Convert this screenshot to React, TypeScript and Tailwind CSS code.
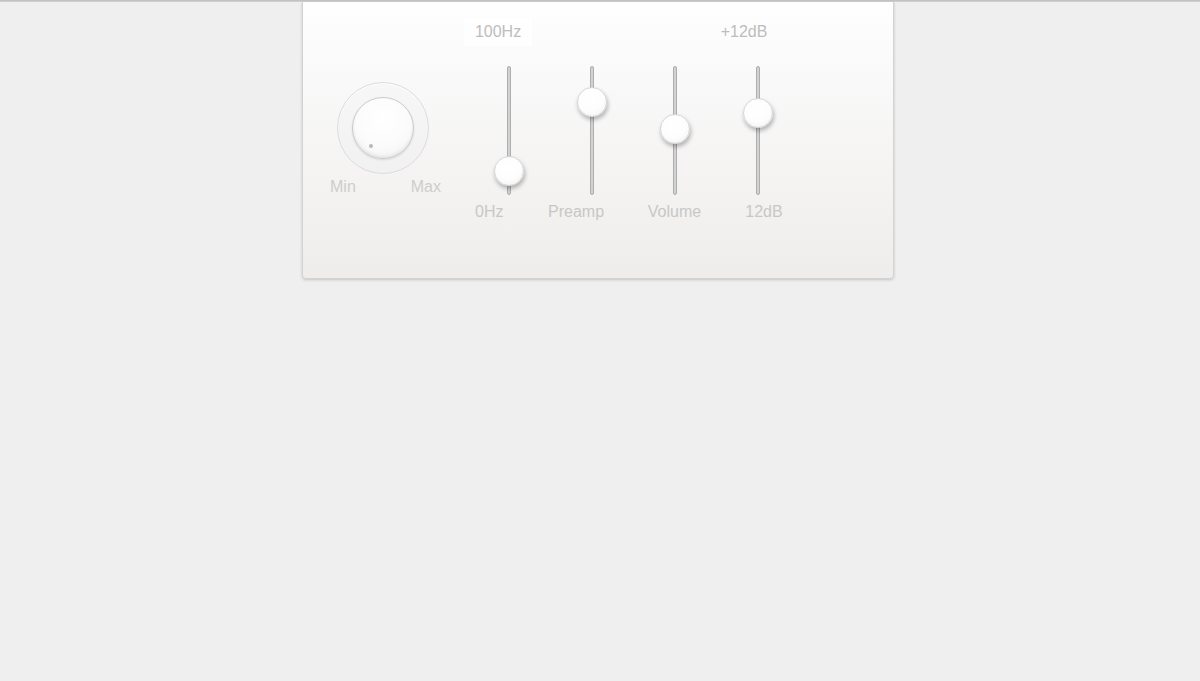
import React from "react";

const sliders = [
  { thumb: "top-[89px]" },
  { thumb: "top-[20px]" },
  { thumb: "top-[47px]" },
  { thumb: "top-[31px]" },
];

export default function App() {
  return (
    <div
      className="min-h-[681px] w-full bg-[#efefef] text-[16px] leading-[18px]"
      style={{ fontFamily: '"Liberation Sans", Arial, sans-serif' }}
    >
      <div className="h-[2px] w-full bg-gradient-to-b from-[#bcbcbc] to-[#d6d6d6]" />
      <div className="ml-[302px] flex h-[277px] w-[592px] items-start rounded-b-[4px] border-x border-b border-[#d3d3d3] bg-gradient-to-b from-[#fefefe] to-[#efedec] pl-[27px] pt-[21px] shadow-[0_1px_3px_rgba(0,0,0,0.18)]">
        {/* Knob */}
        <div className="mt-[59px] flex w-[111px] flex-col items-start">
          <div className="ml-[7px] flex h-[92px] w-[92px] items-center justify-center rounded-full border border-[#dcdcdc] bg-gradient-to-b from-[#f7f7f7] to-[#f1f1f1] shadow-[inset_0_1px_1px_rgba(255,255,255,0.9)]">
            <div className="relative h-[62px] w-[62px] rounded-full border border-[#cbcbcb] bg-[radial-gradient(circle_at_50%_35%,#ffffff_0%,#fbfbfb_55%,#eeeeee_100%)] shadow-[0_1px_2px_rgba(0,0,0,0.12),inset_0_-2px_3px_rgba(0,0,0,0.06)]">
              <div className="absolute left-[16px] top-[46px] h-[4px] w-[4px] rounded-full bg-[#b8b8b8]" />
            </div>
          </div>
          <div className="mt-[4px] flex w-full justify-between text-[#cdcdcd]">
            <span>Min</span>
            <span>Max</span>
          </div>
        </div>

        {/* Sliders */}
        <div className="ml-[26px] flex flex-col">
          <div className="grid grid-cols-[83px_83px_83px_83px] text-[#bdbdbd]">
            <div className="flex justify-center pr-[21px]">
              <span className="-my-[5px] bg-white/80 px-[11px] py-[5px]">100Hz</span>
            </div>
            <div />
            <div />
            <div className="pr-[27px] text-center">+12dB</div>
          </div>
          <div className="mt-[25px] grid grid-cols-[83px_83px_83px_83px]">
            {sliders.map((s, i) => (
              <div key={i} className="flex justify-center">
                <div className="relative h-[129px] w-[4px] rounded-full border border-[#aeaeae] bg-[#d2d2d2]">
                  <div
                    className={`absolute left-1/2 ${s.thumb} h-[30px] w-[30px] -translate-x-1/2 rounded-full border border-[#d6d6d6] bg-[radial-gradient(circle_at_45%_35%,#ffffff_0%,#fdfdfd_55%,#ededed_100%)] shadow-[1px_3px_4px_rgba(0,0,0,0.28)]`}
                  />
                </div>
              </div>
            ))}
          </div>
          <div className="mt-[8px] grid grid-cols-[83px_83px_83px_83px] text-[#c7c7c7]">
            <div className="pl-[8px]">0Hz</div>
            <div className="-ml-[2px] whitespace-nowrap">Preamp</div>
            <div className="text-center">Volume</div>
            <div className="pl-[13px] text-center">12dB</div>
          </div>
        </div>
      </div>
    </div>
  );
}
